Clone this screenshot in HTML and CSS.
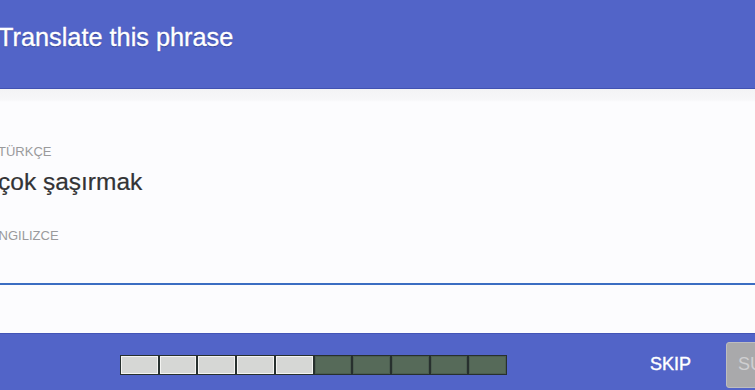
FILE: index.html
```html
<!DOCTYPE html>
<html lang="tr">
<head>
<meta charset="utf-8">
<title>Translate this phrase</title>
<link rel="stylesheet" href="styles.css">
</head>
<body>
<div class="app">
  <header class="top">
    <h1 class="title">Translate this phrase</h1>
  </header>
  <main class="card">
    <div class="content">
      <div class="label">TÜRKÇE</div>
      <div class="phrase">çok şaşırmak</div>
      <label class="label label-target" for="answer">INGILIZCE</label>
      <input class="answer" id="answer" type="text" autocomplete="off">
    </div>
  </main>
  <footer class="bottom">
    <div class="progress">
      <span class="seg done"></span>
      <span class="seg done"></span>
      <span class="seg done"></span>
      <span class="seg done"></span>
      <span class="seg done"></span>
      <span class="seg"></span>
      <span class="seg"></span>
      <span class="seg"></span>
      <span class="seg"></span>
      <span class="seg"></span>
    </div>
    <button class="skip" type="button">SKIP</button>
    <button class="submit" type="button" disabled>SUBMIT</button>
  </footer>
</div>
</body>
</html>
```

FILE: styles.css
```css
html, body {
  margin: 0;
  padding: 0;
  height: 100%;
  overflow: hidden;
}

body {
  font-family: "Liberation Sans", Arial, sans-serif;
  background: #fcfcfe;
}

.app {
  display: flex;
  flex-direction: column;
  width: 100%;
}

.top {
  background: #5264c8;
  border-bottom: 1px solid #4152b2;
  padding: 23px 0 0 0;
  box-sizing: border-box;
  height: 89px;
}

.title {
  margin: 0 0 0 -2px;
  font-size: 25.3px;
  font-weight: normal;
  line-height: 29px;
  color: #ffffff;
  -webkit-text-stroke: 0.35px #ffffff;
  text-shadow: 0 1px 1px rgba(20, 30, 90, 0.5);
}

.card {
  height: 244px;
  background: linear-gradient(#f3f3f5 0, #f7f7f9 11px, #fcfcfe 13px);
  box-sizing: border-box;
  padding-top: 55px;
}

.content {
  display: flex;
  flex-direction: column;
  margin-left: -2px;
}

.label {
  font-size: 13px;
  line-height: 15px;
  color: #9a9a9c;
}

.label-target {
  margin-top: 32px;
  margin-left: -3px;
}

.phrase {
  margin-top: 9px;
  font-size: 24.5px;
  line-height: 28px;
  color: #333335;
  -webkit-text-stroke: 0.2px #333335;
}

.answer {
  margin: 0 0 0 2px;
  height: 42px;
  padding: 0;
  border: none;
  border-bottom: 2px solid #3b6dc2;
  background: transparent;
  outline: none;
  font: inherit;
  width: 100%;
  box-sizing: border-box;
}

.bottom {
  display: flex;
  align-items: center;
  background: #5264c8;
  border-top: 1px solid #4354b6;
  height: 62px;
  box-sizing: border-box;
  padding-left: 120px;
  overflow: hidden;
}

.progress {
  display: flex;
  gap: 2px;
  width: 387px;
  height: 20px;
  box-sizing: border-box;
  border: 1px solid #27302e;
  background: #27302e;
  flex-shrink: 0;
}

.seg {
  flex: 1;
  background: #566a59;
  box-shadow: inset 0 0 0 1px #4c5e50;
}

.seg.done {
  background: #d6d7d5;
  box-shadow: inset 0 0 0 1px #f4f4f2;
}

.skip {
  margin-left: auto;
  margin-right: 35px;
  padding: 0;
  border: none;
  background: transparent;
  color: #ffffff;
  font-family: "Liberation Sans", Arial, sans-serif;
  font-size: 18px;
  -webkit-text-stroke: 0.4px #ffffff;
}

.submit {
  flex-shrink: 0;
  width: 110px;
  height: 46px;
  margin-right: -81px;
  padding: 0 0 0 11px;
  text-align: left;
  border: 1px solid #bdbdbf;
  border-radius: 3px;
  background: #a9a9ab;
  color: #cfcfd1;
  font-family: "Liberation Sans", Arial, sans-serif;
  font-size: 18px;
}
```
